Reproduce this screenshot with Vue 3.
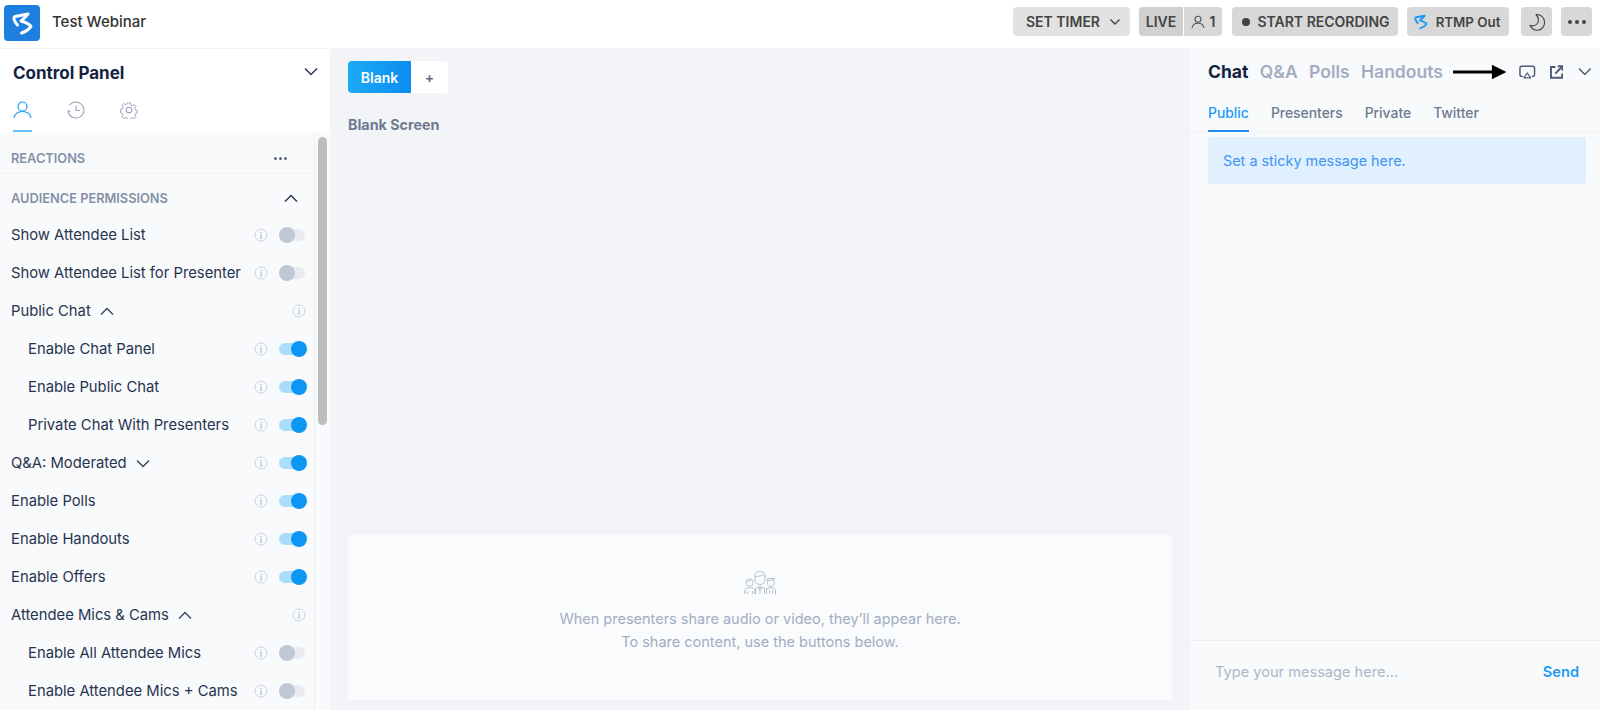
<template>
  <div class="app">
    <header class="topbar">
      <div class="brand">
        <div class="logo">
          <svg width="36" height="36" viewBox="0 0 36 36" fill="none">
            <path d="M13.500 20C10 16 9 13 11 11.500L24 9C22 12 19 14 17 16C20 17 26 19 27 21.500C25 24 21 27 17.500 28" stroke="#fff" stroke-width="3" stroke-linecap="round" stroke-linejoin="round" />
          </svg>
        </div>
        <span class="webinar">Test Webinar</span>
      </div>
      <div class="actions">
        <button class="btn timer">SET TIMER
          <svg width="12" height="8" viewBox="0 0 12 8" fill="none"><path d="M1.500 1.500 6 6l4.500-4.500" stroke="#444" stroke-width="1.400" /></svg>
        </button>
        <div class="live">
          <span class="live-label">LIVE</span>
          <span class="live-count">
            <svg width="14" height="14" viewBox="0 0 14 14" fill="none" stroke="#555" stroke-width="1.100"><circle cx="7" cy="4.200" r="3" /><path d="M1 13c.6-3.400 3-4.800 6-4.800s5.400 1.400 6 4.800" /></svg>
            1
          </span>
        </div>
        <button class="btn record"><i class="dot"></i>START RECORDING</button>
        <button class="btn rtmp">
          <svg width="14" height="16" viewBox="8 7 21 23" fill="none">
            <path d="M13.500 20C10 16 9 13 11 11.500L24 9C22 12 19 14 17 16C20 17 26 19 27 21.500C25 24 21 27 17.500 28" stroke="#1c9bf5" stroke-width="3" stroke-linecap="round" stroke-linejoin="round" />
          </svg>
          RTMP Out
        </button>
        <button class="btn square">
          <svg width="18" height="18" viewBox="0 0 18 18" fill="none"><path d="M8 1.500c4.500-.5 8.500 3 8.500 7.500a7.500 7.500 0 0 1-14.500 3.300c4.500 1.700 8.500-1 8.500-5.300C10.500 5 9.500 3 8 1.500Z" stroke="#444" stroke-width="1.100" stroke-linejoin="round" /></svg>
        </button>
        <button class="btn square dots"><i></i><i></i><i></i></button>
      </div>
    </header>

    <div class="body">
      <aside class="control">
        <div class="control-head">
          <div class="control-title">
            <h2>Control Panel</h2>
            <svg width="14" height="9" viewBox="0 0 14 9" fill="none"><path d="M1 1.500 7 7.500l6-6" stroke="#2c3a57" stroke-width="1.500" /></svg>
          </div>
          <div class="control-tabs">
            <span class="ctab active">
              <svg width="19" height="18" viewBox="0 0 19 18" fill="none" stroke="#1c9bf5" stroke-width="1.200"><circle cx="9.500" cy="5.500" r="4.500" /><path d="M1 17c.8-4.200 4.200-6.500 8.500-6.500S17.200 12.800 18 17" /></svg>
            </span>
            <span class="ctab">
              <svg width="18" height="18" viewBox="0 0 18 18" fill="none" stroke="#9aa5ba" stroke-width="1.100"><path d="M1.200 11A8 8 0 1 0 2.500 4.300" /><path d="M9 4.500V9.500H13" /><path d="M.8 8.800 1.500 11l2-1.200" /></svg>
            </span>
            <span class="ctab">
              <svg width="18" height="18" viewBox="0 0 18 18" fill="none" stroke="#9aa5ba" stroke-width="1.100" stroke-linejoin="round"><circle cx="9" cy="9" r="2.800" /><path d="M7.500 1h3l.5 2.300 1.700.8 2-1.200 2 2.200-1.200 2 .7 1.700 2 .6v2.800l-2 .6-.7 1.700 1.200 2-2 2.100-2-1.200-1.700.7-.5 2.300h-3l-.5-2.300-1.700-.7-2 1.200-2-2.100 1.200-2-.7-1.700-2-.6V8.300l2-.6.7-1.700-1.200-2 2-2.200 2 1.200 1.700-.8Z" transform="translate(.9 .9) scale(.9)" /></svg>
            </span>
          </div>
        </div>
        <div class="control-body">
          <div class="list">
            <div class="section first">
              <span>REACTIONS</span>
              <span class="more"><i></i><i></i><i></i></span>
            </div>
            <div class="section second">
              <span>AUDIENCE PERMISSIONS</span>
              <svg width="14" height="9" viewBox="0 0 14 9" fill="none"><path d="M1 7.500 7 1.500l6 6" stroke="#2c3a57" stroke-width="1.500" /></svg>
            </div>
            <div v-for="row in rows" :key="row.label" class="row" :class="{ sub: row.sub }">
              <span class="row-label">
                {{ row.label }}
                <svg v-if="row.chevron" class="row-chev" width="14" height="9" viewBox="0 0 14 9" fill="none">
                  <path :d="row.chevron === 'up' ? 'M1 7.500 7 1.500l6 6' : 'M1 1.500 7 7.500l6-6'" stroke="#3c4a66" stroke-width="1.500" />
                </svg>
              </span>
              <svg class="info" width="14" height="14" viewBox="0 0 14 14" fill="none">
                <circle cx="7" cy="7" r="6" stroke="#cdd4e0" stroke-width="1" />
                <path d="M6 6.200h1.200v3.600M5.800 10h2.600" stroke="#b4bdcd" stroke-width="1" />
                <circle cx="7" cy="4.200" r=".8" fill="#b4bdcd" />
              </svg>
              <span v-if="row.on !== undefined" class="toggle" :class="{ on: row.on }"><i></i></span>
            </div>
          </div>
          <div class="scroll"><div class="thumb"></div></div>
        </div>
      </aside>

      <main class="stage">
        <div class="stage-tabs">
          <span class="blank">Blank</span>
          <span class="plus">+</span>
        </div>
        <div class="stage-name">Blank Screen</div>
        <div class="stage-space"></div>
        <div class="presenters">
          <svg width="32" height="23" viewBox="0 0 32 23" fill="none" stroke="#aab3c5" stroke-width=".8">
            <circle cx="5.700" cy="11.500" r="3.600" />
            <path d="M2.500 10.500c1.500 0 4-.5 5-2" />
            <path d="M.5 23v-3c0-2 2-3.500 5.200-3.500s5 1.500 5 3.500v3M3 23v-3M8.500 23v-3" />
            <path d="M11 4c0-2.500 2-3.500 5-3.500S21 1.500 21 4v5c0 2.500-2 4.500-5 4.500S11 11.500 11 9Z" />
            <path d="M11 5.500c3 0 6.500-.5 7.500-2 .5 1 1.500 2 2.500 2" />
            <path d="M11.500 23v-5.500l4.500-2 4.500 2V23M16 15.500V23M14.500 16.500 16 19l1.500-2.500" />
            <path d="M23.500 7.500h6.500v5c0 1.800-1.400 3-3.200 3s-3.300-1.200-3.300-3Z" />
            <path d="M23.500 9.500c2.500 0 4.500-.2 6.500-1" />
            <path d="M22.500 23v-5.500c3-1 6-1 8 0 .7.500 1 1.300 1 2.500v3M25.500 23v-4M28.500 23v-4" />
          </svg>
          <p>When presenters share audio or video, they’ll appear here.<br />To share content, use the buttons below.</p>
        </div>
      </main>

      <aside class="chat">
        <div class="chat-head">
          <nav class="chat-tabs">
            <span class="active">Chat</span>
            <span>Q&amp;A</span>
            <span>Polls</span>
            <span>Handouts</span>
          </nav>
          <svg class="arrow" width="55" height="16" viewBox="0 0 55 16"><path d="M0 6.500h40V.5L55 8 40 15.500V9.500H0Z" fill="#000" /></svg>
          <svg class="airplay" width="17" height="14" viewBox="0 0 17 14" fill="none" stroke="#4a5b78" stroke-width="1.500"><path d="M4 11.500H3A2 2 0 0 1 1 9.500V3A2 2 0 0 1 3 1h11a2 2 0 0 1 2 2v6.500a2 2 0 0 1-2 2h-1" /><path d="M8.500 8 12 13H5Z" stroke-linejoin="round" stroke-width="1.200" /></svg>
          <svg class="popout" width="14" height="14" viewBox="0 0 14 14" fill="none" stroke="#4a5b78" stroke-width="2"><path d="M5.500 1.800H1V13h11.500V8.500" /><path d="M5.500 8.500 12.500 1.500M8 1h5v5" /></svg>
          <svg class="chat-chev" width="14" height="9" viewBox="0 0 14 9" fill="none"><path d="M1 1.500 7 7.500l6-6" stroke="#4a5b78" stroke-width="1.500" /></svg>
        </div>
        <nav class="sub-tabs">
          <span class="active">Public</span>
          <span>Presenters</span>
          <span>Private</span>
          <span>Twitter</span>
        </nav>
        <div class="sticky">Set a sticky message here.</div>
        <div class="messages"></div>
        <div class="composer">
          <span class="placeholder">Type your message here...</span>
          <span class="send">Send</span>
        </div>
      </aside>
    </div>
  </div>
</template>

<script setup>
const rows = [
  { label: 'Show Attendee List', on: false },
  { label: 'Show Attendee List for Presenter', on: false },
  { label: 'Public Chat', chevron: 'up' },
  { label: 'Enable Chat Panel', on: true, sub: true },
  { label: 'Enable Public Chat', on: true, sub: true },
  { label: 'Private Chat With Presenters', on: true, sub: true },
  { label: 'Q&A: Moderated', chevron: 'down', on: true },
  { label: 'Enable Polls', on: true },
  { label: 'Enable Handouts', on: true },
  { label: 'Enable Offers', on: true },
  { label: 'Attendee Mics & Cams', chevron: 'up' },
  { label: 'Enable All Attendee Mics', on: false, sub: true },
  { label: 'Enable Attendee Mics + Cams', on: false, sub: true }
]
</script>

<style>
html, body {
  background: #fff;
}
</style>

<style scoped>
.app {
  height: 710px;
  display: flex;
  flex-direction: column;
  overflow: hidden;
  font-family: Inter, "Noto Sans", sans-serif;
  color: #27344f;
}

.topbar {
  height: 48px;
  flex: none;
  display: flex;
  justify-content: space-between;
  align-items: center;
  background: #fff;
  padding: 0 8px 5px 4px;
  box-sizing: border-box;
}
.brand {
  display: flex;
  align-items: center;
  gap: 12px;
}
.logo {
  width: 36px;
  height: 36px;
  margin-top: 3px;
  background: #1f7fe0;
  border-radius: 4px;
  display: flex;
  align-items: center;
  justify-content: center;
}
.webinar {
  font-size: 15px;
  color: #333;
  font-weight: 500;
}
.actions {
  display: flex;
  align-items: center;
  height: 29px;
}
.btn {
  height: 29px;
  border: none;
  border-radius: 4px;
  background: #d8d8d8;
  color: #444;
  font: 600 14px Inter, sans-serif;
  display: flex;
  align-items: center;
  justify-content: center;
  padding: 0;
}
.timer {
  width: 117px;
  gap: 9px;
  padding-left: 4px;
  background: #e2e2e2;
}
.live {
  width: 83px;
  height: 29px;
  margin-left: 9px;
  display: flex;
  gap: 1px;
  font-size: 14px;
  font-weight: 600;
  color: #444;
}
.live-label {
  width: 44px;
  background: #d0d0d0;
  border-radius: 4px 0 0 4px;
  display: flex;
  align-items: center;
  justify-content: center;
}
.live-count {
  flex: 1;
  background: #d8d8d8;
  border-radius: 0 4px 4px 0;
  display: flex;
  align-items: center;
  justify-content: center;
  gap: 5px;
}
.record {
  width: 166px;
  margin-left: 10px;
  gap: 7px;
  padding-left: 2px;
}
.dot {
  width: 8px;
  height: 8px;
  border-radius: 50%;
  background: #444;
}
.rtmp {
  width: 102px;
  margin-left: 9px;
  gap: 8px;
  font-size: 13.300px;
  padding-right: 2px;
}
.square {
  width: 31px;
  margin-left: 12px;
}
.dots {
  margin-left: 9px;
  gap: 3px;
}
.dots i {
  width: 4px;
  height: 4px;
  border-radius: 50%;
  background: #444;
}

.body {
  flex: 1;
  display: flex;
  min-height: 0;
}

.control {
  width: 330px;
  flex: none;
  display: flex;
  flex-direction: column;
  background: #f9fafc;
}
.control-head {
  height: 84px;
  flex: none;
  background: #fff;
  border-top: 1px solid #f3f4f7;
  box-sizing: border-box;
  padding: 0 12px 0 13px;
}
.control-title {
  height: 49px;
  display: flex;
  align-items: center;
  justify-content: space-between;
}
.control-title h2 {
  margin: 0;
  font-size: 17px;
  line-height: 53px;
  font-weight: 700;
  color: #14233f;
}
.control-title svg {
  margin: 0 0 4px;
}
.control-tabs {
  display: flex;
  gap: 34px;
}
.ctab {
  width: 19px;
  height: 34px;
  padding-top: 3px;
  box-sizing: border-box;
  display: flex;
  justify-content: center;
}
.ctab.active {
  border-bottom: 2px solid #6bc1f9;
}
.control-body {
  flex: 1;
  display: flex;
  min-height: 0;
}
.list {
  width: 315px;
  flex: none;
  box-sizing: border-box;
  overflow: hidden;
  border-right: 1px solid #eceef2;
}
.section {
  display: flex;
  align-items: center;
  justify-content: space-between;
  font-size: 12.800px;
  font-weight: 600;
  color: #8490a8;
  box-sizing: border-box;
}
.section.first {
  height: 42px;
  padding: 12px 27px 0 11px;
  border-bottom: 1px solid #f1f3f6;
}
.section.second {
  height: 42px;
  padding: 6px 16px 0 11px;
}
.more {
  display: flex;
  gap: 2px;
}
.more i {
  width: 3px;
  height: 3px;
  border-radius: 50%;
  background: #5a6680;
}
.row {
  height: 38px;
  display: flex;
  align-items: center;
  padding: 0 8px 0 11px;
  font-size: 14.800px;
  color: #27344f;
}
.row.sub {
  padding-left: 28px;
}
.row-label {
  flex: 1;
  display: flex;
  align-items: center;
  gap: 9px;
  white-space: nowrap;
}
.row-chev {
  margin-top: 1px;
}
.info {
  flex: none;
}
.toggle {
  flex: none;
  width: 26px;
  height: 12px;
  margin: 0 1px 0 11px;
  border-radius: 6px;
  background: #e9ebf0;
  position: relative;
}
.toggle i {
  position: absolute;
  top: -2px;
  left: 0;
  width: 16px;
  height: 16px;
  border-radius: 50%;
  background: #c0c8d6;
}
.toggle.on {
  background: #acdcfb;
}
.toggle.on i {
  left: 12px;
  background: #0d96f2;
}
.scroll {
  flex: 1;
  padding: 5px 3px 0 3px;
  border-right: 1px solid #f3f4f7;
}
.thumb {
  width: 9px;
  height: 288px;
  border-radius: 5px;
  background: #bdbdbd;
}

.stage {
  flex: 1;
  min-width: 0;
  display: flex;
  flex-direction: column;
  background: #f2f4f8;
  padding: 13px 18px 10px 18px;
  box-sizing: border-box;
}
.stage-tabs {
  display: flex;
  height: 32px;
  font-size: 14px;
  font-weight: 600;
}
.blank {
  width: 63px;
  background: linear-gradient(90deg, #1eaaf6, #0a8df0);
  color: #fff;
  border-radius: 4px 0 0 4px;
  display: flex;
  align-items: center;
  justify-content: center;
}
.plus {
  width: 37px;
  background: #fff;
  color: #5f6c85;
  border-radius: 0 4px 4px 0;
  display: flex;
  align-items: center;
  justify-content: center;
}
.stage-name {
  margin-top: 22px;
  font-size: 14.300px;
  font-weight: 700;
  line-height: 20px;
  color: #6d7a90;
}
.stage-space {
  flex: 1;
}
.presenters {
  height: 165px;
  flex: none;
  background: #fafbfd;
  border-radius: 4px;
  padding-top: 36px;
  box-sizing: border-box;
  display: flex;
  flex-direction: column;
  align-items: center;
}
.presenters p {
  margin: 14px 0 0;
  font-size: 14.500px;
  line-height: 22.500px;
  color: #a3adc2;
  text-align: center;
}

.chat {
  width: 410px;
  flex: none;
  display: flex;
  flex-direction: column;
  background: #f9fafc;
}
.chat-head {
  height: 49px;
  flex: none;
  display: flex;
  align-items: center;
  padding: 0 8px 2px 18px;
  box-sizing: border-box;
}
.chat-tabs {
  display: flex;
  gap: 11.400px;
  font-size: 17.500px;
  font-weight: 600;
  color: #a3adc2;
}
.chat-tabs .active {
  color: #14233f;
  font-weight: 700;
}
.arrow {
  margin-left: 10px;
}
.airplay {
  margin-left: 13px;
}
.popout {
  margin-left: 14px;
}
.chat-chev {
  margin-left: 15px;
}
.sub-tabs {
  height: 35px;
  flex: none;
  display: flex;
  gap: 22px;
  padding: 0 18px;
  box-sizing: border-box;
  border-bottom: 1px solid #f1f3f6;
  font-size: 13.900px;
  font-weight: 500;
  color: #6d7a90;
}
.sub-tabs span {
  height: 35px;
  padding-top: 8px;
  box-sizing: border-box;
}
.sub-tabs .active {
  color: #1c9bf5;
  border-bottom: 2px solid #1f8cf0;
}
.sticky {
  height: 47px;
  flex: none;
  margin: 5px 14px 0 18px;
  padding-left: 15px;
  display: flex;
  align-items: center;
  background: #e0f0fe;
  border-radius: 3px;
  font-size: 14.400px;
  color: #3f96f3;
}
.messages {
  flex: 1;
}
.composer {
  height: 70px;
  flex: none;
  display: flex;
  align-items: center;
  justify-content: space-between;
  padding: 0 21px 7px 25px;
  box-sizing: border-box;
  border-top: 1px solid #eceef2;
  font-size: 14.600px;
}
.placeholder {
  color: #aeb6c6;
}
.send {
  color: #1c9bf5;
  font-weight: 600;
}
</style>
